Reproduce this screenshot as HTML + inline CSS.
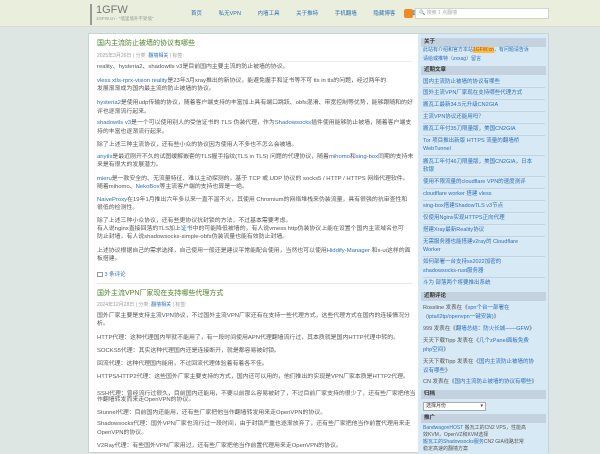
<!DOCTYPE html>
<html><head><meta charset="utf-8"><style>
*{margin:0;padding:0;box-sizing:border-box}
body{width:600px;height:450px;overflow:hidden;background:#dde6e2;font-family:"Liberation Sans","Noto Sans CJK SC",sans-serif;font-size:5.5px;color:#555;position:relative}
#hd{position:absolute;left:0;top:0;width:600px;height:27px;background:#e9efdc;border-bottom:1px solid #d8dfcc}
.a{position:absolute;white-space:nowrap;line-height:8px}
.mn{font-size:5.9px}
a,.l{color:#2e6fb8;text-decoration:none}
#box{position:absolute;left:88px;top:33px;width:461px;height:420px;background:#fff;border:1px solid #c8d4d0}
#sb{position:absolute;left:418px;top:34px;width:130px;height:420px;background:#d8e9f6}
.bd{position:absolute;left:421px;width:125px;height:9px;background:#c3d2de;font-weight:bold;color:#333;padding-left:3px;line-height:9px;font-size:5.5px}
.sep{position:absolute;left:423px;width:122px;border-top:1px solid #c2d4e2}
.t{color:#4b7f28;font-size:7px}
.m{color:#999;font-size:5px}
</style></head><body>
<div id="hd"></div>
<div style="position:absolute;left:90px;top:4px;width:2px;height:21px;background:#999"></div>
<div class="a" style="left:96px;top:4px;font-size:11px;color:#777;line-height:12px">1GFW</div>
<div class="a" style="left:96px;top:15px;font-size:4.5px;color:#999">1GFW.cn - "墙里墙外不受墙" </div>
<div class="a" style="left:191px;top:10px;font-size:5.5px;word-spacing:4px"><a>首页</a>&nbsp;&nbsp; <a>私无VPN</a>&nbsp;&nbsp; <a>内墙工具</a>&nbsp;&nbsp; <a>关于推特</a>&nbsp;&nbsp; <a>手机翻墙</a>&nbsp;&nbsp; <a>隐藏博客</a>&nbsp;&nbsp; <a>翻墙问题</a>&nbsp;&nbsp; <a>翻墙相关</a></div>
<div style="position:absolute;left:404px;top:9px;width:9px;height:9px;background:#f08a24;border-radius:2px"></div>
<div style="position:absolute;left:415px;top:8px;width:134px;height:11px;background:#fff;border:1px solid #cfd8c8"></div>
<div class="a" style="left:419px;top:9px;color:#aaa;font-size:5px">🔍 搜索 1 点翻墙</div>
<div id="box"></div>
<div id="sb"></div>

<div class="a t" style="left:97px;top:40px">国内主流防止被墙的协议有哪些</div>
<div class="a m" style="left:97px;top:52px">2025年3月26日 | 分类: <a>翻墙相关</a> | 标签:</div>
<div style="position:absolute;left:97px;top:61px;width:315px;border-top:1px solid #eee"></div>
<div class="a mn" style="left:97px;top:63px">reality、hysteria2、shadowtls v3是目前国内主要主流的防止被墙的协议。</div>
<div class="a mn" style="left:97px;top:77px"><a>vless xtls-rprx-vision reality</a>是23年3月xray推出的新协议，能避免握手和证书等不可 tls in tls的问题，经过两年的</div>
<div class="a mn" style="left:97px;top:85px">发展渐渐成为国内最主流的防止被墙的协议。</div>
<div class="a mn" style="left:97px;top:99px"><a>hysteria2</a>是使用udp传输的协议，随着客户端支持的丰富加上具有端口跳跃、obfs混淆、带宽控制等优势，能够跟随和的好</div>
<div class="a mn" style="left:97px;top:108px">评也逐渐流行起来。</div>
<div class="a mn" style="left:97px;top:119px"><a>shadowtls v3</a>是一个可以使用别人的受信证书的 TLS 伪装代理，作为<a>Shadowsocks</a>插件使用能够防止被墙，随着客户端支</div>
<div class="a mn" style="left:97px;top:128px">持的丰富也逐渐流行起来。</div>
<div class="a mn" style="left:97px;top:141px">除了上述三种主流协议，还有些小众的协议因为使用人不多也不怎么会被墙。</div>
<div class="a mn" style="left:97px;top:153px"><a>anytls</a>是最近刚开不久的试图缓解嵌套的TLS握手指纹(TLS in TLS) 问题的代理协议，随着<a>mihomo</a>和<a>sing-box</a>同期的支持未</div>
<div class="a mn" style="left:97px;top:161px">来是有很大的发展潜力。</div>
<div class="a mn" style="left:97px;top:175px"><a>mieru</a>是一款安全的、无流量特征、难以主动探测的，基于 TCP 或 UDP 协议的 socks5 / HTTP / HTTPS 网络代理软件。</div>
<div class="a mn" style="left:97px;top:183px">随着mihomo、<a>NekoBox</a>等主流客户端的支持也算是一绝。</div>
<div class="a mn" style="left:97px;top:196px"><a>NaiveProxy</a>在19年1月推出六年多以来一直不温不火，其使用 Chromium的网络堆栈来伪装流量，具有很强的抗审查性和</div>
<div class="a mn" style="left:97px;top:204px">很低的检测性。</div>
<div class="a mn" style="left:97px;top:217px">除了上述三种小众协议，还有些更协议抗封锁的方法，不过基本需要考虑。</div>
<div class="a mn" style="left:97px;top:225px">有人说nginx直接回落的TLS加上<a>证书</a>中的可能降低被墙的，有人说vmess http伪装协议上能在设置个国内主流域名也可</div>
<div class="a mn" style="left:97px;top:233px">防止封墙，有人说shadowsocks-simple-obfs伪装流量也能有效防止封墙。</div>
<div class="a mn" style="left:97px;top:247px">上述协议根据自己的需求选择，自己使用一般还是建议平常能配合使用，当然也可以使用<a>Hiddify-Manager</a> 和x-ui这样的面</div>
<div class="a mn" style="left:97px;top:255px">板搭建。</div>
<div class="a" style="left:97px;top:271px"><span style="display:inline-block;width:6px;height:5px;border:1px solid #999;vertical-align:-1px"></span> <a>3 条评论</a></div>
<div style="position:absolute;left:97px;top:283px;width:315px;border-top:1px solid #e5e5e5"></div>
<div class="a t" style="left:97px;top:290px">国外主流VPN厂家现在支持哪些代理方式</div>
<div class="a m" style="left:97px;top:301px">2024年12月28日 | 分类: <a>翻墙相关</a> | 标签:</div>
<div class="a mn" style="left:97px;top:312px">国外厂家主要是支持主流VPN协议，不过国外主流VPN厂家还有在支持一些代理方式，这些代理方式在国内的连接情况分</div>
<div class="a mn" style="left:97px;top:320px">析。</div>
<div class="a mn" style="left:97px;top:334px">HTTP代理：这种代理国内早就不能用了，有一段时间使用APN代理翻墙流行过，其本质就是国内HTTP代理中转的。</div>
<div class="a mn" style="left:97px;top:347px">SOCKS5代理：其实这种代理国内还是连接断开，就是都容易被封锁。</div>
<div class="a mn" style="left:97px;top:360px">回流代理：这种代理国内能用，不过回流代理体验着有着各不佳。</div>
<div class="a mn" style="left:97px;top:373px">HTTPS/HTTP2代理：这些国外厂家主要支持的方式，国内还可以用的，他们推出的实现是VPN厂家本质是HTTP2代理。</div>
<div class="a mn" style="left:97px;top:390px">SSH代理：曾经流行过很久，目前国内还能用，不要以前那么容易被封了，不过目前厂家支持的很少了，还有些厂家把他当</div>
<div class="a mn" style="left:97px;top:396px">作翻墙转发而来走OpenVPN的协议。</div>
<div class="a mn" style="left:97px;top:409px">Stunnel代理：目前国内还能用，还有些厂家把他当作翻墙转发用来走OpenVPN的协议。</div>
<div class="a mn" style="left:97px;top:420px">Shadowsocks代理：国外VPN厂家也流行过一段时间，由于封锁严重也逐渐放弃了，还有些厂家把他当作前置代理用来走</div>
<div class="a mn" style="left:97px;top:429px">OpenVPN的协议。</div>
<div class="a mn" style="left:97px;top:442px">V2Ray代理：有些国外VPN厂家用过，还有些厂家把他当作前置代理用来走OpenVPN的协议。</div>

<div class="bd" style="top:38px">关于</div>
<div class="a" style="left:423px;top:46px;font-size:5px;line-height:9px"><a>此站有介绍和官方本站<span style="background:#f5c04a;color:#d04a00">1GFW.cn</span>，有问题请告诉</a></div>
<div class="a" style="left:423px;top:55px;font-size:5px"><a>请给或推特（zxxag）留言</a></div>
<div class="bd" style="top:66px">近期文章</div>
<div class="a l" style="left:423px;top:78px">国内主流防止被墙的协议有哪些</div><div class="sep" style="top:87px"></div>
<div class="a l" style="left:423px;top:89px">国外主流VPN厂家现在支持哪些代理方式</div><div class="sep" style="top:99px"></div>
<div class="a l" style="left:423px;top:101px">搬瓦工最新34.5元升级CN2GIA</div><div class="sep" style="top:111px"></div>
<div class="a l" style="left:423px;top:113px">主流VPN协议还能用吗？</div><div class="sep" style="top:123px"></div>
<div class="a l" style="left:423px;top:125px">搬瓦工年付35刀限量版，美国CN2GIA</div><div class="sep" style="top:135px"></div>
<div class="a l" style="left:423px;top:137px">Tor 项目推出新版 HTTPS 流量的翻墙桥</div>
<div class="a l" style="left:423px;top:145px">WebTunnel</div><div class="sep" style="top:155px"></div>
<div class="a l" style="left:423px;top:158px">搬瓦工年付46刀限量版，美国CN2GIA，日本</div>
<div class="a l" style="left:423px;top:166px">软银</div><div class="sep" style="top:176px"></div>
<div class="a l" style="left:423px;top:178px">使用不限流量的cloudflare VPN的速度测评</div><div class="sep" style="top:188px"></div>
<div class="a l" style="left:423px;top:190px">cloudflare worker 搭建 vless</div><div class="sep" style="top:200px"></div>
<div class="a l" style="left:423px;top:202px">sing-box搭建ShadowTLS v3节点</div><div class="sep" style="top:212px"></div>
<div class="a l" style="left:423px;top:214px">仅使用Nginx实现HTTPS正向代理</div><div class="sep" style="top:224px"></div>
<div class="a l" style="left:423px;top:226px">搭建Xray最新Reality协议</div><div class="sep" style="top:236px"></div>
<div class="a l" style="left:423px;top:238px">无需服务器也能搭建v2ray的 Cloudflare</div>
<div class="a l" style="left:423px;top:246px">Worker</div><div class="sep" style="top:256px"></div>
<div class="a l" style="left:423px;top:258px">如何部署一台支持ss2022加密的</div>
<div class="a l" style="left:423px;top:267px">shadowsocks-rust服务器</div><div class="sep" style="top:277px"></div>
<div class="a l" style="left:423px;top:279px">斗为 部落两个将要推出系统</div>
<div class="bd" style="top:292px">近期评论</div>
<div class="a" style="left:423px;top:304px">Rossline 发表在《<a>xpn个台一部署在</a></div>
<div class="a" style="left:426px;top:313px"><a>(ipta/l2tp/openvpn一键安装)</a>》</div>
<div class="a" style="left:423px;top:325px">999 发表在《<a>翻墙总结：防火长城——GFW</a>》</div>
<div class="a" style="left:423px;top:337px">天天下载Tipp 发表在《<a>几个zPanel面板免费</a></div>
<div class="a" style="left:423px;top:346px"><a>php空间</a>》</div>
<div class="a" style="left:423px;top:358px">天天下载Tipp 发表在《<a>国内主流防止被墙的协</a></div>
<div class="a" style="left:423px;top:367px"><a>议有哪些</a>》</div>
<div class="a" style="left:423px;top:378px">CN 发表在《<a>国内主流防止被墙的协议有哪些</a>》</div>
<div class="bd" style="top:390px">归档</div>
<div style="position:absolute;left:423px;top:402px;width:63px;height:9px;background:#fff;border:1px solid #aaa;font-size:5px;line-height:7px;padding-left:2px;color:#333">选择月份 <span style="float:right;padding-right:2px">▾</span></div>
<div class="bd" style="top:414px">推广</div>
<div class="a" style="left:423px;top:424px;font-size:5px"><a>BandwagonHOST</a> 搬瓦工的CN2 VPS，性能高</div>
<div class="a" style="left:423px;top:431px;font-size:5px">效KVM，OpenVZ和KVM选择</div>
<div class="a" style="left:423px;top:438px;font-size:5px"><a>搬瓦工的Shadowsocks服务</a>CN2 GIA线路非常</div>
<div class="a" style="left:423px;top:445px;font-size:5px">稳定高速的翻墙方案</div>
</body></html>
